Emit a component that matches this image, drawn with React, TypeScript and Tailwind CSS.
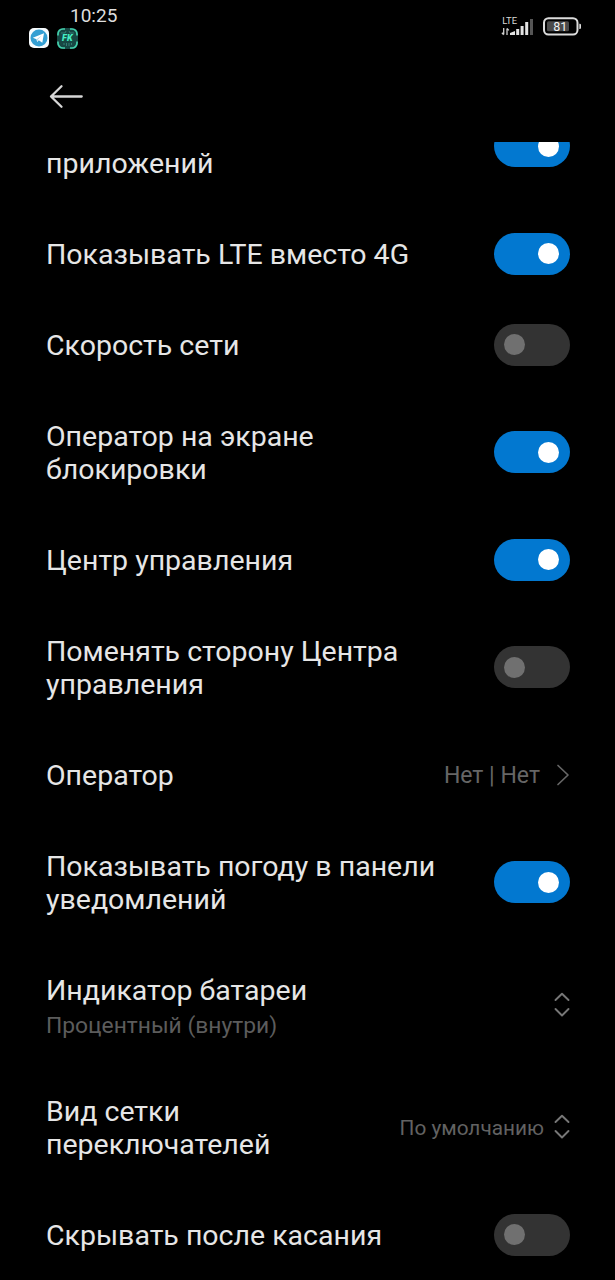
import React from 'react';

function Toggle({ on }: { on: boolean }) {
  return (
    <div className={`flex h-[42px] w-[76px] shrink-0 items-center rounded-full ${on ? 'justify-end bg-[#0278d0] pr-[11px]' : 'justify-start bg-[#333333] pl-[10px]'}`}>
      <div className={`size-[21px] rounded-full ${on ? 'bg-white' : 'bg-[#707070]'}`} />
    </div>
  );
}

function UpDown() {
  return (
    <svg className="h-[26px] w-[16px] shrink-0" viewBox="0 0 16 26" fill="none" stroke="#777777" strokeWidth="1.9" strokeLinecap="round" strokeLinejoin="round">
      <path d="M1.5 8 8 1.700l6.500 6.300M1.500 17 8 23.500l6.500-6.500" />
    </svg>
  );
}

type RowProps = { lines: string[]; note?: string; h: string; children: React.ReactNode };

function Row({ lines, note, h, children }: RowProps) {
  return (
    <div className={`flex shrink-0 items-center justify-between ${h}`}>
      <div className={`text-[28.5px] leading-[33px] whitespace-nowrap ${note ? 'pt-[5px]' : 'pt-[2px]'}`}>
        {lines.map((l) => <div key={l}>{l}</div>)}
        {note && <div className="pt-[4px] text-[22.8px] leading-[30px] text-[#5c5c5c]">{note}</div>}
      </div>
      {children}
    </div>
  );
}

function AppIcons() {
  return (
    <div className="flex gap-[8px] pl-[29px]">
      <svg className="size-[20px]" viewBox="0 0 20 20">
        <rect width="20" height="20" rx="5" fill="#f7fbfd" />
        <circle cx="10" cy="10" r="8.500" fill="#349fd3" />
        <path d="M3.800 9.800 15 5.200 13.300 14.800 9.800 12.300 8.200 14 7.500 11.200Z" fill="#fff" />
        <path d="M7.600 11.200 12.700 7.400 8.800 11.700 8.200 14Z" fill="#b7d9ea" />
      </svg>
      <svg className="size-[21px]" viewBox="0 0 21 21">
        <rect width="21" height="21" rx="6" fill="#174743" />
        <path d="M1 7.500V6A5 5 0 0 1 6 1H8M13 1h2A5 5 0 0 1 20 6V7.500M20 13.500V15a5 5 0 0 1-5 5H13M8 20H6A5 5 0 0 1 1 15V13.500" fill="none" stroke="#43cfab" strokeWidth="1.700" />
        <path d="M4 5h4l1-2M17 5h-4l-1-2M7 15v2M9.500 15v3M12 15v3M14.500 15v2" fill="none" stroke="#3b8b80" strokeWidth=".8" />
        <text x="10.300" y="13.300" textAnchor="middle" fill="#45efc5" fontFamily="Roboto, sans-serif" fontWeight="900" fontStyle="italic" fontSize="9">FK</text>
      </svg>
    </div>
  );
}

function Signal() {
  return (
    <svg className="h-[22px] w-[34px]" viewBox="0 0 34 22">
      <text x="1.200" y="8.300" fill="#d8d8d8" fontFamily="Roboto, sans-serif" fontSize="9.500" textLength="15">LTE</text>
      <path d="M2.700 12v6.500M.9 16.700l1.800 2M6 19v-6.500M6 12.400l1.800 2" fill="none" stroke="#d0d0d0" strokeWidth="1.300" />
      <path d="M9 19v-2l5-2v4Z M15.200 13h3v6h-3Z M19.600 10h3v9h-3Z M24.200 6h3v13h-3Z" fill="#e2e2e2" />
      <path d="M29 3h3v16h-3Z" fill="#555" />
    </svg>
  );
}

function Battery() {
  return (
    <svg className="h-[19px] w-[40px]" viewBox="0 0 40 19">
      <rect x="2" y="1.200" width="33.500" height="16.300" rx="4.500" fill="none" stroke="#dcdcdc" strokeWidth="2" />
      <rect x="5" y="4.300" width="22" height="10" rx="1.500" fill="#4a4a4a" />
      <path d="M37.300 6.800h.5a1.200 1.200 0 0 1 1.200 1.200v2.800a1.200 1.200 0 0 1-1.200 1.200h-.5Z" fill="#dcdcdc" />
      <text x="18.200" y="13.900" textAnchor="middle" fill="#f4f4f4" fontFamily="Roboto, sans-serif" fontWeight="400" fontSize="12.500">81</text>
    </svg>
  );
}

export default function App() {
  return (
    <div className="flex h-[1280px] w-[615px] flex-col overflow-hidden bg-black font-[Roboto,sans-serif] text-[#e6e6e6]">
      <header className="flex h-[142px] shrink-0 flex-col">
        <div className="flex h-[84px] justify-between">
          <div className="flex flex-col">
            <div className="h-[28px] pt-[5px] pl-[70px] text-[19px] leading-[22px] text-[#dedede]">10:25</div>
            <AppIcons />
          </div>
          <div className="flex gap-[7px] pt-[16px] pr-[33px]">
            <Signal />
            <div className="pt-[1px]"><Battery /></div>
          </div>
        </div>
        <svg className="ml-[49px] h-[25px] w-[35px]" viewBox="0 0 35 25" fill="none" stroke="#d6d6d6" strokeWidth="2.300" strokeLinecap="round" strokeLinejoin="round">
          <path d="M12.500 2.300 2 12.500l10.500 10.200M2 12.500h30.700" />
        </svg>
      </header>
      <main className="flex h-[1138px] flex-col overflow-hidden pr-[45px] pl-[46px]">
        <div className="-mt-[58px] shrink-0">
          <Row lines={['\u00a0', 'приложений']} h="h-[124px]"><Toggle on /></Row>
        </div>
        <Row lines={['Показывать LTE вместо 4G']} h="h-[91px]"><Toggle on /></Row>
        <Row lines={['Скорость сети']} h="h-[91px]"><Toggle on={false} /></Row>
        <Row lines={['Оператор на экране', 'блокировки']} h="h-[124px]"><Toggle on /></Row>
        <Row lines={['Центр управления']} h="h-[91px]"><Toggle on /></Row>
        <Row lines={['Поменять сторону Центра', 'управления']} h="h-[124px]"><Toggle on={false} /></Row>
        <Row lines={['Оператор']} h="h-[91px]">
          <div className="flex items-center gap-[16px] text-[23px] leading-[30px] text-[#666666]">
            <span className="pt-[3px]">Нет | Нет</span>
            <svg className="h-[22px] w-[14px]" viewBox="0 0 14 22" fill="none" stroke="#666666" strokeWidth="1.700" strokeLinecap="round" strokeLinejoin="round">
              <path d="m2 1.500 10 9.500-10 9.500" />
            </svg>
          </div>
        </Row>
        <Row lines={['Показывать погоду в панели', 'уведомлений']} h="h-[124px]"><Toggle on /></Row>
        <Row lines={['Индикатор батареи']} note="Процентный (внутри)" h="h-[121px]"><UpDown /></Row>
        <Row lines={['Вид сетки', 'переключателей']} h="h-[124px]">
          <div className="flex items-center gap-[10px] text-[20.8px] text-[#626262]">
            <span className="pt-[3px]">По умолчанию</span>
            <UpDown />
          </div>
        </Row>
        <Row lines={['Скрывать после касания']} h="h-[91px]"><Toggle on={false} /></Row>
      </main>
    </div>
  );
}
